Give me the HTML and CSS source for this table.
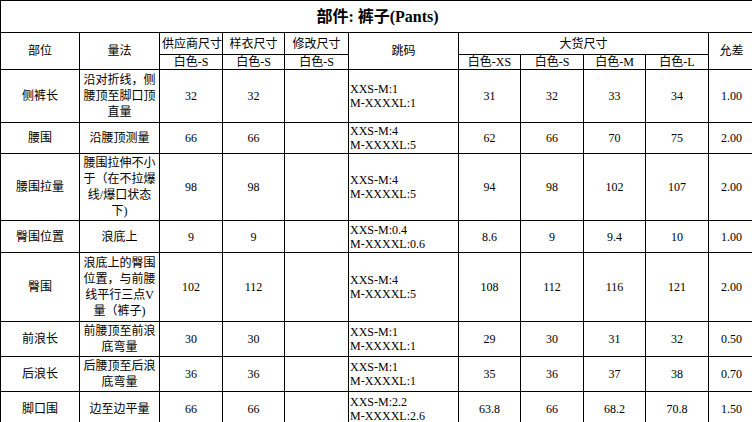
FILE: index.html
```html
<!DOCTYPE html>
<html lang="zh">
<head>
<meta charset="utf-8">
<title>部件: 裤子(Pants)</title>
<link rel="stylesheet" href="styles.css">
</head>
<body>
<table class="spec">
  <colgroup>
    <col class="c-part"><col class="c-method"><col class="c-s1"><col class="c-s2"><col class="c-s3">
    <col class="c-grade"><col class="c-b1"><col class="c-b2"><col class="c-b3"><col class="c-b4"><col class="c-tol">
  </colgroup>
  <tr class="r-title"><td colspan="11" class="title">部件: 裤子(Pants)</td></tr>
  <tr class="r-h1">
    <td rowspan="2">部位</td>
    <td rowspan="2">量法</td>
    <td>供应商尺寸</td>
    <td>样衣尺寸</td>
    <td>修改尺寸</td>
    <td rowspan="2">跳码</td>
    <td colspan="4">大货尺寸</td>
    <td rowspan="2">允差</td>
  </tr>
  <tr class="r-h2">
    <td>白色-S</td><td>白色-S</td><td>白色-S</td>
    <td>白色-XS</td><td>白色-S</td><td>白色-M</td><td>白色-L</td>
  </tr>
  <tr class="r-53">
    <td>侧裤长</td><td class="m">沿对折线，侧<br>腰顶至脚口顶<br>直量</td><td>32</td><td>32</td><td></td>
    <td class="g">XXS-M:1<br>M-XXXXL:1</td><td>31</td><td>32</td><td>33</td><td>34</td><td>1.00</td>
  </tr>
  <tr class="r-31">
    <td>腰围</td><td class="m">沿腰顶测量</td><td>66</td><td>66</td><td></td>
    <td class="g">XXS-M:4<br>M-XXXXL:5</td><td>62</td><td>66</td><td>70</td><td>75</td><td>2.00</td>
  </tr>
  <tr class="r-67">
    <td>腰围拉量</td><td class="m">腰围拉伸不小<br>于（在不拉爆<br>线/爆口状态<br>下)</td><td>98</td><td>98</td><td></td>
    <td class="g">XXS-M:4<br>M-XXXXL:5</td><td>94</td><td>98</td><td>102</td><td>107</td><td>2.00</td>
  </tr>
  <tr class="r-32">
    <td>臀围位置</td><td class="m">浪底上</td><td>9</td><td>9</td><td></td>
    <td class="g">XXS-M:0.4<br>M-XXXXL:0.6</td><td>8.6</td><td>9</td><td>9.4</td><td>10</td><td>1.00</td>
  </tr>
  <tr class="r-69">
    <td>臀围</td><td class="m">浪底上的臀围<br>位置，与前腰<br>线平行三点V<br>量（裤子)</td><td>102</td><td>112</td><td></td>
    <td class="g">XXS-M:4<br>M-XXXXL:5</td><td>108</td><td>112</td><td>116</td><td>121</td><td>2.00</td>
  </tr>
  <tr class="r-35">
    <td>前浪长</td><td class="m">前腰顶至前浪<br>底弯量</td><td>30</td><td>30</td><td></td>
    <td class="g">XXS-M:1<br>M-XXXXL:1</td><td>29</td><td>30</td><td>31</td><td>32</td><td>0.50</td>
  </tr>
  <tr class="r-35">
    <td>后浪长</td><td class="m">后腰顶至后浪<br>底弯量</td><td>36</td><td>36</td><td></td>
    <td class="g">XXS-M:1<br>M-XXXXL:1</td><td>35</td><td>36</td><td>37</td><td>38</td><td>0.70</td>
  </tr>
  <tr class="r-35">
    <td>脚口围</td><td class="m">边至边平量</td><td>66</td><td>66</td><td></td>
    <td class="g">XXS-M:2.2<br>M-XXXXL:2.6</td><td>63.8</td><td>66</td><td>68.2</td><td>70.8</td><td>1.50</td>
  </tr>
</table>
</body>
</html>
```
FILE: styles.css
```css
html, body {
  margin: 0;
  padding: 0;
  background: #fff;
  overflow: hidden;
}

.spec {
  border-collapse: collapse;
  table-layout: fixed;
  width: 754px;
  font-family: "Liberation Serif", "Noto Sans CJK SC", serif;
  font-size: 12px;
  color: #000;
}

.spec td {
  border: 1px solid #000;
  padding: 0 2px;
  text-align: center;
  vertical-align: middle;
  line-height: 14px;
  white-space: nowrap;
  overflow: hidden;
}

.c-part { width: 79px; }
.c-method { width: 80px; }
.c-s1 { width: 63px; }
.c-s2 { width: 62px; }
.c-s3 { width: 64px; }
.c-grade { width: 110px; }
.c-b1 { width: 62px; }
.c-b2 { width: 63px; }
.c-b3 { width: 62px; }
.c-b4 { width: 63px; }
.c-tol { width: 46px; }

.spec td.title {
  font-size: 16px;
  font-weight: bold;
  line-height: 20px;
}

.spec td.m {
  line-height: 16px;
  padding: 0 1px;
}

.spec td.g {
  text-align: left;
  padding: 0 1px;
  line-height: 14px;
}

.r-title { height: 32px; }
.r-h1 { height: 22px; }
.r-h2 { height: 14px; }
.r-53 { height: 53px; }
.r-31 { height: 31px; }
.r-67 { height: 67px; }
.r-32 { height: 32px; }
.r-69 { height: 69px; }
.r-35 { height: 35px; }
```
